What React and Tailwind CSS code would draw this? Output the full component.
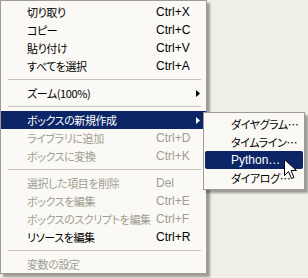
const jp = "font-['Noto_Sans_CJK_JP','Liberation_Sans',sans-serif] [font-feature-settings:'palt'] tracking-[-0.4px]";
const latin = "font-['Liberation_Sans',sans-serif]";

const menu = [
  { label: "切り取り", key: "Ctrl+X" },
  { label: "コピー", key: "Ctrl+C" },
  { label: "貼り付け", key: "Ctrl+V" },
  { label: "すべてを選択", key: "Ctrl+A" },
  { sep: true },
  { label: "ズーム(100%)", sub: true },
  { sep: true },
  { label: "ボックスの新規作成", sub: true, active: true },
  { label: "ライブラリに追加", key: "Ctrl+D", disabled: true },
  { label: "ボックスに変換", key: "Ctrl+K", disabled: true },
  { sep: true },
  { label: "選択した項目を削除", key: "Del", disabled: true },
  { label: "ボックスを編集", key: "Ctrl+E", disabled: true },
  { label: "ボックスのスクリプトを編集", key: "Ctrl+F", disabled: true },
  { label: "リソースを編集", key: "Ctrl+R" },
  { sep: true },
  { label: "変数の設定", disabled: true },
];

const submenu = [
  { label: "ダイヤグラム…" },
  { label: "タイムライン…" },
  { label: "Python…", active: true, latin: true },
  { label: "ダイアログ…" },
];

function Arrow({ light }) {
  return (
    <svg width="4" height="7" viewBox="0 0 4 7" className="block">
      <path d="M0 0 L4 3.5 L0 7 Z" fill={light ? "#ffffff" : "#000000"} />
    </svg>
  );
}

function Row({ item }) {
  if (item.sep) {
    return (
      <div className="h-[9px] flex items-center pl-[7px] pr-[5px]">
        <div className="h-px w-full bg-[#c9c6b8]"></div>
      </div>
    );
  }
  const color = item.active ? "bg-[#0c2566] text-white" : item.disabled ? "text-[#a09d90]" : "text-black";
  return (
    <div className={`h-[18px] flex items-center pl-[26px] ${color}`}>
      <span className={`w-[129px] text-[11px] leading-none whitespace-nowrap ${jp}`}>{item.label}</span>
      <span className={`w-[40px] text-[12px] leading-none ${latin}`}>{item.key}</span>
      {item.sub && <Arrow light={item.active} />}
    </div>
  );
}

export default function App() {
  return (
    <div className="relative w-[308px] h-[278px] bg-[#f0efe6] overflow-hidden">
      <div className="w-[207px] h-[274px] bg-[#faf9f5] border border-[#9f9d93] pt-[2px] shadow-[3px_3px_2px_rgba(0,0,0,0.35)]">
        {menu.map((item, i) => (
          <Row key={i} item={item} />
        ))}
      </div>

      <div className="absolute left-[203px] top-[112px] w-[102px] bg-[#faf9f5] border border-[#9f9d93] py-[2px] shadow-[3px_3px_2px_rgba(0,0,0,0.35)]">
        {submenu.map((item, i) => (
          <div
            key={i}
            className={`h-[18px] flex items-center pl-[26px] mx-[1px] rounded-[2px] ${item.active ? "bg-[#0c2566] text-white" : "text-black"}`}
          >
            <span className={`whitespace-nowrap leading-none ${item.latin ? `text-[12px] ${latin}` : `text-[11px] ${jp}`}`}>{item.label}</span>
          </div>
        ))}
      </div>

      <svg className="absolute left-[284px] top-[159px]" width="13" height="21" viewBox="0 0 13 21">
        <path
          d="M0.5 0.5 L0.5 16.5 L4.5 12.5 L7.5 19.5 L10 18.5 L7 11.5 L12.5 11.5 Z"
          fill="#ffffff"
          stroke="#000000"
          strokeWidth="1"
          strokeLinejoin="miter"
        />
      </svg>
    </div>
  );
}
